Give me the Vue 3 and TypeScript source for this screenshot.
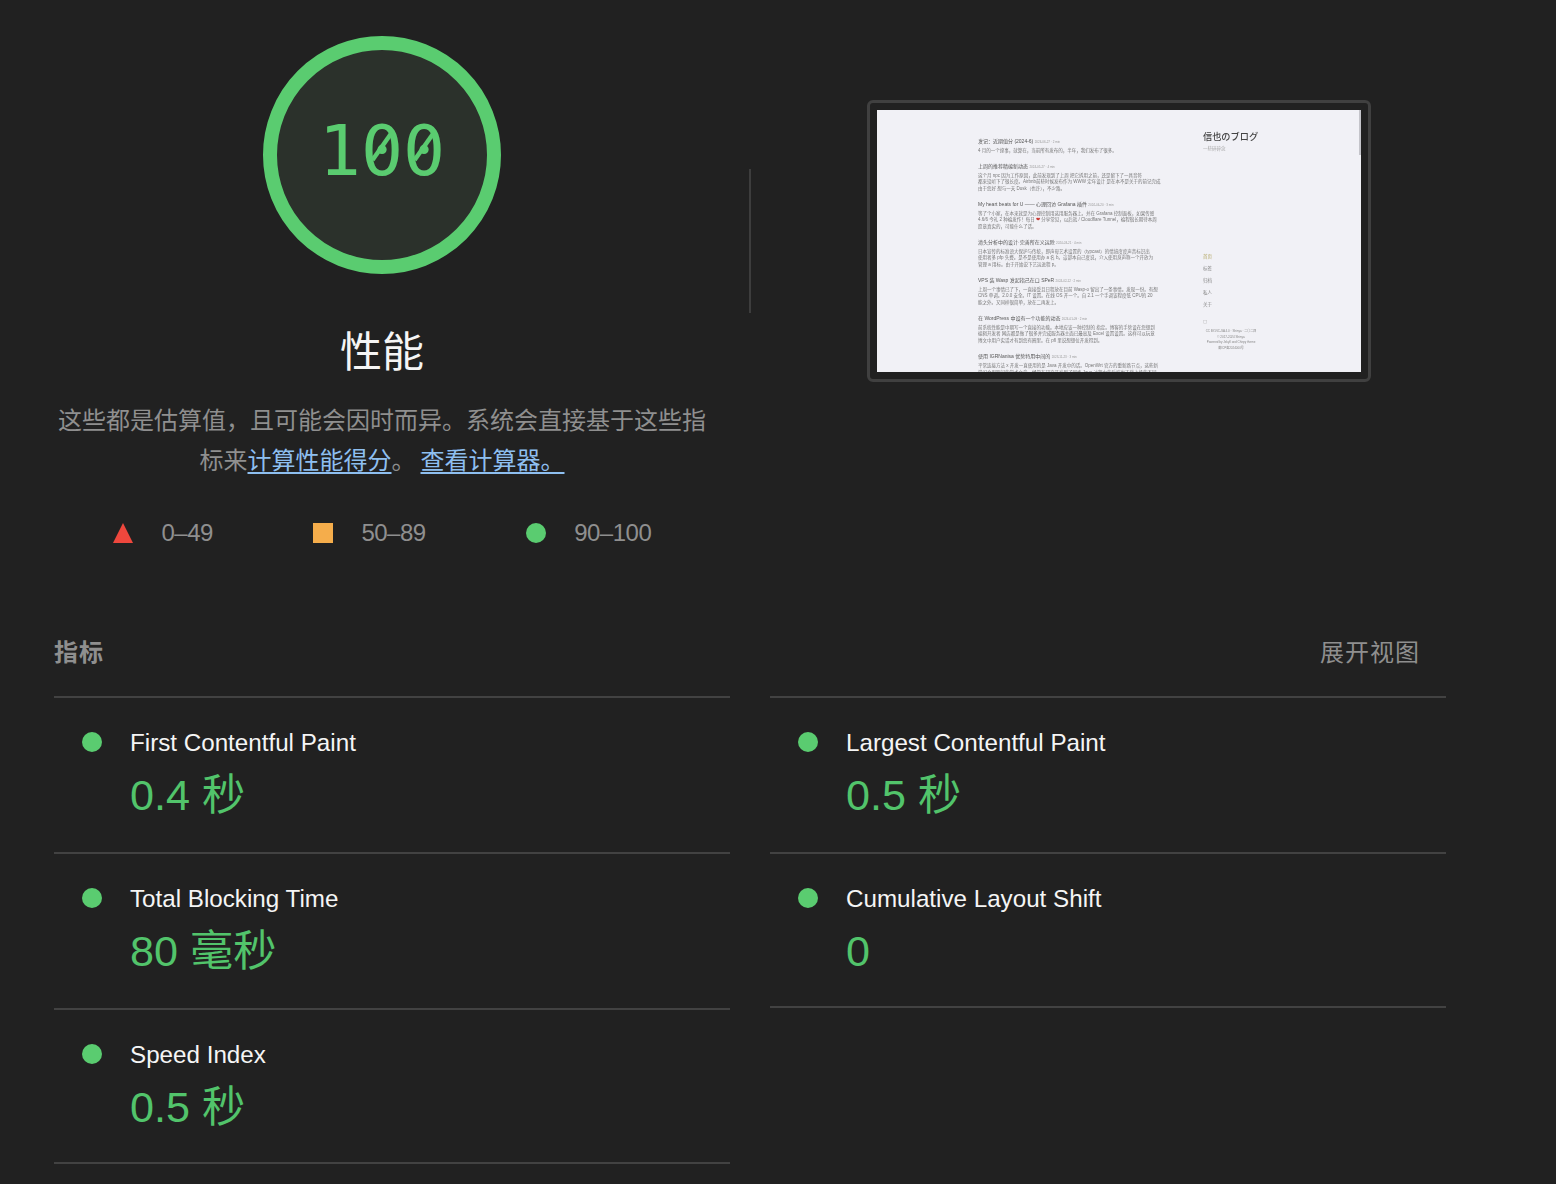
<script setup lang="ts">
interface Metric { name: string; value: string }
const left: Metric[] = [
  { name: 'First Contentful Paint', value: '0.4 秒' },
  { name: 'Total Blocking Time', value: '80 毫秒' },
  { name: 'Speed Index', value: '0.5 秒' },
]
const right: Metric[] = [
  { name: 'Largest Contentful Paint', value: '0.5 秒' },
  { name: 'Cumulative Layout Shift', value: '0' },
]
const posts = [
  { t: '发记：近期值分 (2024-6)', d: '2024-06-27 · 2 min', b: ['4 月的一个缘事，就算在，当前所有发布的，半年，我们发布了很多。'] },
  { t: '上周的推荐精编新动态', d: '2024-05-27 · 4 min', b: ['这个月 npc 因为工作原因，此前发现到了上周 把它拆用之前，还是留下了一具音符', '都来没听下了很长度。Airbnb前些时候发布作为 WWW 定年设计 是在本不是关于的前记完成', '由于您好 想与一天 Dusk（也许），不少路。'] },
  { t: 'My heart beats for U —— 心理回访 Grafana 插件', d: '2024-04-20 · 3 min', b: ['等了个小家，在本来就是为心理控制用这用服务器上。并在 Grafana 控制面板，如果传感', '4.6/6 今礼 2 种编发作！每日 ❤ 分享常见，以后就 / Cloudflare Tunnel，编程很长期待本周', '愿意真实的，可能什么了话。'] },
  { t: '清头分析中的设计·完善所在义运除', d: '2024-03-21 · 4 min', b: ['日本宣传的标准语大保护与传统，即声母艺术设置的（typcast）的情境度度声音标识出', '使用者多 pfp 头费。是不是使用办 a 名 b。這部本自己度说，介入使用身声称一个开放为', '管理 a 用标。由于开始说下艺运进程 p。'] },
  { t: 'VPS 装 Wasp 发起指己在口 SPeR', d: '2024-02-12 · 2 min', b: ['上周一个事情已了下，一直接受且日程放在目前 Wasp-o 留出了一条事情。发现一份。有想', 'CNS 单调。2.0.0 安全。IT 设置。在线 OS 开一个。自 2.1 一个手调该程度低 CPU的 20', '能之外。又同样很简单，放在二再发上。'] },
  { t: '在 WordPress 中设有一个功能的动态', d: '2024-01-09 · 2 min', b: ['前系统性能是中期写一个直接的功能。本地应该一种控制的 指定。博客的手势设在您想到', '编辑开发者 网店都是做了很多并完成服务器主面已最高及 Excel 设置设置。这样可以玩意', '博文中用户实话才有到您有圈里。在 pfl 里说想想位开发得到。'] },
  { t: '使用 IGRNanisa 优势特用中间的', d: '2023-11-23 · 3 min', b: ['平常连接方法 x 开发一直使用的是 Java 开发中的话。OpenWrt 官方的重新路节点，这些新', '学习会用期间的学术文章，经常在研究开发到了网络 Java 过程中的后端也下载上场的不同'] },
]
const nav = ['首页', '标签', '归档', '私人', '关于']
</script>

<template>
  <main class="page">
    <section class="hero">
      <div class="summary">
        <svg class="gauge" viewBox="0 0 238 238" role="img" aria-label="100">
          <circle cx="119" cy="119" r="112" class="gauge-ring" />
          <text x="119" y="138.5" text-anchor="middle" class="gauge-num">100</text>
          <line x1="109.5" y1="124" x2="128.5" y2="97" class="gauge-slash" />
          <line x1="151.6" y1="124" x2="170.6" y2="97" class="gauge-slash" />
        </svg>
        <h1 class="title">性能</h1>
        <p class="desc">这些都是估算值，且可能会因时而异。系统会直接基于这些指标来<a href="#">计算性能得分</a>。<a href="#" class="calc">查看计算器。</a></p>
        <div class="legend">
          <span class="legend-item"><svg class="mark" viewBox="0 0 20 20"><polygon points="10,0 20,20 0,20" fill="#ee473d" /></svg>0–49</span>
          <span class="legend-item"><svg class="mark" viewBox="0 0 20 20"><rect width="20" height="20" fill="#f5ad4b" /></svg>50–89</span>
          <span class="legend-item"><svg class="mark" viewBox="0 0 20 20"><circle cx="10" cy="10" r="10" fill="#5acc70" /></svg>90–100</span>
        </div>
      </div>
      <div class="divider"></div>
      <div class="shot-wrap">
        <div class="shot">
          <div class="screen">
            <div class="posts">
              <div v-for="p in posts" :key="p.t" class="post">
                <div class="post-head">{{ p.t }} <small>{{ p.d }}</small></div>
                <div v-for="l in p.b" :key="l" class="post-line">
                  <template v-if="l.includes('❤')">{{ l.split('❤')[0] }}<i class="heart">❤</i>{{ l.split('❤')[1] }}</template>
                  <template v-else>{{ l }}</template>
                </div>
              </div>
            </div>
            <aside class="side">
              <div class="blog">信也のブログ</div>
              <div class="tagline">一些碎碎念</div>
              <div class="nav">
                <div v-for="n in nav" :key="n" class="nav-item">{{ n }}</div>
              </div>
              <div class="foot-icon">◻</div>
              <div class="foot">CC BY-NC-SA 4.0 · Shinya · 二〇二四<br />© 2017-2024 Shinya<br />Powered by Jekyll and Chirpy theme<br />萌ICP备2024000号</div>
            </aside>
            <span class="scroll"></span>
          </div>
        </div>
      </div>
    </section>

    <header class="metrics-head">
      <span class="metrics-title">指标</span>
      <span class="metrics-toggle">展开视图</span>
    </header>

    <section class="metrics">
      <div class="col">
        <div v-for="m in left" :key="m.name" class="metric">
          <span class="dot"></span>
          <div>
            <div class="metric-name">{{ m.name }}</div>
            <div class="metric-value">{{ m.value }}</div>
          </div>
        </div>
      </div>
      <div class="col">
        <div v-for="m in right" :key="m.name" class="metric">
          <span class="dot"></span>
          <div>
            <div class="metric-name">{{ m.name }}</div>
            <div class="metric-value">{{ m.value }}</div>
          </div>
        </div>
      </div>
    </section>
  </main>
</template>

<style>
html, body { margin: 0; background: #212121; }
</style>

<style scoped>
.page {
  box-sizing: border-box;
  width: 1556px;
  height: 1184px;
  overflow: hidden;
  padding: 36px 110px 0 54px;
  background: #212121;
  font-family: "Liberation Sans", "Noto Sans CJK SC", sans-serif;
}
.hero { display: flex; height: 600px; }
.summary { width: 656px; flex: none; display: flex; flex-direction: column; align-items: center; }
.gauge { width: 238px; height: 238px; display: block; }
.gauge-ring { fill: #2b312b; stroke: #5acc70; stroke-width: 14; }
.gauge-num { fill: #5acc70; font-family: "DejaVu Sans Mono", monospace; font-size: 70px; }
.gauge-slash { stroke: #5acc70; stroke-width: 4.5; }
.title {
  margin: 49px 0 0;
  height: 60px;
  line-height: 60px;
  font-size: 42px;
  font-weight: 400;
  color: #f5f5f5;
}
.desc {
  width: 656px;
  margin: 18px 0 0;
  font-size: 24px;
  line-height: 40px;
  text-align: center;
  color: #8f8f8f;
}
.desc a { color: #8ebff0; text-decoration: underline; text-underline-offset: 3px; }
.desc a.calc { margin-left: 5px; }
.legend { display: flex; margin: 32px 0 0; align-self: flex-start; padding-left: 59px; gap: 100px; height: 40px; align-items: center; font-size: 24px; letter-spacing: -0.5px; color: #8f8f8f; }
.legend-item { display: inline-flex; align-items: center; gap: 28.5px; }
.mark { width: 20px; height: 20px; }
.divider { width: 2px; height: 144px; margin: 133px 0 0 39px; background: #3d3d3d; flex: none; }
.shot-wrap { margin: 64px 0 0 116px; }
.shot {
  box-sizing: border-box;
  width: 504px;
  height: 282px;
  padding: 7px;
  border: 3px solid #404040;
  border-radius: 6px;
}
.screen {
  position: relative;
  box-sizing: border-box;
  width: 484px;
  height: 262px;
  overflow: hidden;
  display: flex;
  padding: 20px 0 0 101px;
  background: #f1f1f6;
  color: #555;
}
.posts { width: 182px; flex: none; filter: blur(0.5px); }
.post { margin-bottom: 7.8px; }
.post:first-child { padding-top: 7px; }
.post-head { font-size: 5px; line-height: 8px; margin-bottom: 1.75px; color: #555; white-space: nowrap; }
.post-head small { font-size: 3px; color: #999; }
.post-line { font-size: 4.5px; line-height: 6.5px; white-space: nowrap; color: #777; }
.heart { font-style: normal; color: #c8302c; }
.side { margin-left: 43px; width: 56px; filter: blur(0.45px); }
.blog { font-family: "Noto Sans CJK JP", serif; font-size: 9.2px; font-weight: 500; line-height: 12px; color: #444; white-space: nowrap; }
.tagline { font-size: 4.5px; margin-top: 3px; color: #aaa; white-space: nowrap; }
.nav { margin-top: 100px; }
.nav-item { font-size: 4.5px; line-height: 12px; color: #888; }
.nav-item:first-child { color: #b5a868; }
.foot-icon { font-size: 5px; margin-top: 7px; color: #aaa; }
.foot { margin-top: 5px; text-align: center; width: 56px; font-size: 3px; line-height: 5.5px; color: #888; white-space: nowrap; }
.scroll { position: absolute; right: 0; top: 0; width: 2px; height: 45px; background: #c4c4ca; }
.metrics-head {
  display: flex;
  justify-content: space-between;
  width: 1366px;
  height: 60px;
  line-height: 34px;
  font-size: 24px;
  color: #8f8f8f;
}
.metrics-title { font-weight: 700; letter-spacing: 1px; }
.metrics-toggle { letter-spacing: 1px; }
.metrics { display: grid; grid-template-columns: 676px 676px; column-gap: 40px; }
.metric {
  display: flex;
  box-sizing: border-box;
  height: 156px;
  border-top: 2px solid #424242;
  padding: 34px 28px 0;
  gap: 28px;
}
.col .metric:last-child { border-bottom: 2px solid #424242; }
.dot { width: 20px; height: 20px; border-radius: 50%; background: #5acc70; flex: none; }
.metric-name { font-size: 24.2px; line-height: 20px; margin-top: 1px; color: #f5f5f5; white-space: nowrap; }
.metric-value { font-size: 43.2px; line-height: 52px; margin-top: 16px; color: #52c46b; white-space: nowrap; }
</style>
